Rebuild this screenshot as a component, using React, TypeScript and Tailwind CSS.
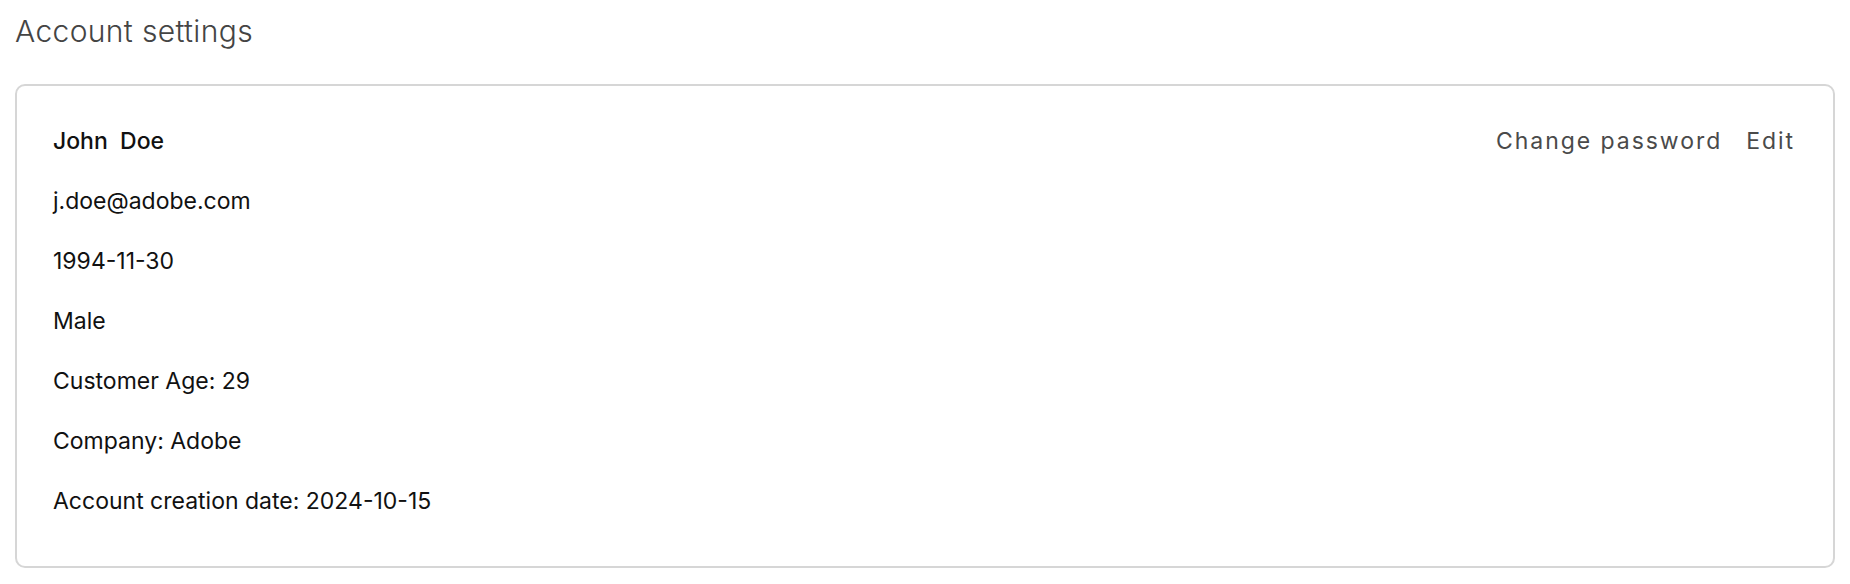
export default function App() {
  const rows = [
    "j.doe@adobe.com",
    "1994-11-30",
    "Male",
    "Customer Age: 29",
    "Company: Adobe",
    "Account creation date: 2024-10-15",
  ];
  return (
    <div className="min-h-screen bg-white px-[15px] pt-[12px]" style={{ fontFamily: "Inter, 'Noto Sans', sans-serif" }}>
      <h1 className="text-[30px] leading-[38px] font-light text-[#444444] tracking-[0.35px]">Account settings</h1>
      <div className="mt-[34px] rounded-[10px] border-2 border-[#d6d6d6] pl-[36px] pr-[38px] pt-[41px] pb-[51px]">
        <div className="flex flex-col gap-[32px] text-[23px] leading-[28px] text-[#111111]">
          <div className="flex items-center justify-between">
            <span className="font-medium">John&nbsp; Doe</span>
            <div className="flex items-center gap-[24px] text-[#4a4a4a] tracking-[1.95px]">
              <span>Change password</span>
              <span>Edit</span>
            </div>
          </div>
          {rows.map((r) => (
            <div key={r}>{r}</div>
          ))}
        </div>
      </div>
    </div>
  );
}
